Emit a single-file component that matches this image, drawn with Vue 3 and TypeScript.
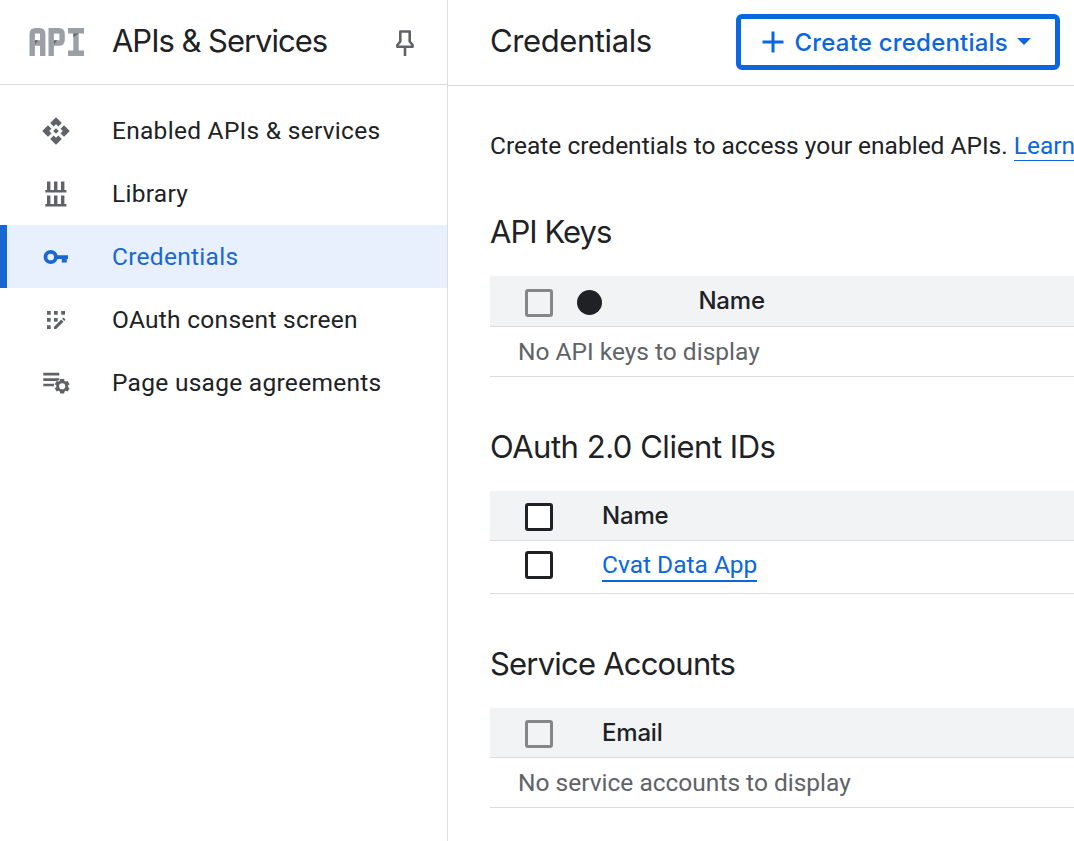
<script setup lang="ts">
interface NavItem { label: string; icon: string; active?: boolean }
interface Section {
  title: string
  kind: string
  column: string
  status?: boolean
  disabled?: boolean
  empty?: string
  rows?: string[]
}

const nav: NavItem[] = [
  { label: 'Enabled APIs & services', icon: 'api' },
  { label: 'Library', icon: 'library' },
  { label: 'Credentials', icon: 'key', active: true },
  { label: 'OAuth consent screen', icon: 'consent' },
  { label: 'Page usage agreements', icon: 'agreements' },
]

const sections: Section[] = [
  { title: 'API Keys', kind: 'keys', column: 'Name', status: true, disabled: true, empty: 'No API keys to display' },
  { title: 'OAuth 2.0 Client IDs', kind: 'clients', column: 'Name', rows: ['Cvat Data App'] },
  { title: 'Service Accounts', kind: 'accounts', column: 'Email', disabled: true, empty: 'No service accounts to display' },
]
</script>

<template>
  <div class="console">
    <aside class="sidebar">
      <header class="product">
        <svg class="logo" viewBox="0 0 56 28" role="img" aria-label="API">
          <g fill="none" stroke="#9aa0a6" stroke-width="5.4">
            <path d="M3.2 28V6Q3.2 2.7 6.5 2.7H10.4Q13.7 2.7 13.7 6V28M3.2 15H13.7" />
            <path d="M22.2 28V2.7H29.8Q33.1 2.7 33.1 6V11.7Q33.1 15 29.8 15H22.2" />
            <path d="M39 2.7H55M39 25.3H55M47 2.7V25.3" />
          </g>
          <path d="M6 12.3h3.2L6 16.5zM25 12.3h3.2L25 16.5zM44.4 5.4h5.2l-5.2 3.8z" fill="#63676c" />
        </svg>
        <h2 class="product-name">APIs &amp; Services</h2>
        <svg class="pin" viewBox="0 0 20 28">
          <path d="M5.3 2.5H14.7V12.5L17.6 16V17.8H2.4V16L5.3 12.5ZM10 18V27" fill="none" stroke="#5f6368" stroke-width="2.6" stroke-linejoin="round" />
        </svg>
      </header>

      <nav class="menu">
        <a v-for="item in nav" :key="item.label" class="menu-item" :class="{ active: item.active }">
          <svg class="menu-icon" viewBox="0 0 30 30" fill="currentColor">
            <g v-if="item.icon === 'api'">
              <path d="M15 1.2L20.8 7L17.3 10.5L15 8.2L12.7 10.5L9.2 7ZM1.2 15L7 9.2L10.5 12.7L8.2 15L10.5 17.3L7 20.8ZM28.8 15L23 9.2L19.5 12.7L21.8 15L19.5 17.3L23 20.8ZM15 28.8L9.2 23L12.7 19.5L15 21.8L17.3 19.5L20.8 23ZM15 12.2L17.8 15L15 17.8L12.2 15Z" />
            </g>
            <g v-else-if="item.icon === 'library'">
              <path d="M6 2.5h3.4v8.6h3.6V2.5h3.4v8.6h3.6V2.5h3.4v8.6H25.4v2.5H4.3v-2.5H6zM6 16.5h3.4v8.6h3.6v-8.6h3.4v8.6h3.6v-8.6h3.4v8.6h2v2.5H4.3v-2.5H6z" />
            </g>
            <g v-else-if="item.icon === 'key'">
              <circle cx="9.7" cy="15" r="5.2" fill="none" stroke="currentColor" stroke-width="3.7" />
              <path d="M15.5 13.2H27v3.8h-1.2v3.5h-5V17h-5.3z" />
            </g>
            <g v-else-if="item.icon === 'consent'">
              <path d="M6 6h3.7v3.7H6zM13 6h3.7v3.7H13zM20.2 6H24v3.7h-3.8zM6 13h3.7v3.7H6zM6 20.2h3.7V24H6zM13 13h3.7v3l-.8.7H13zM13 21.8l7.3-7.3 2.2 2.2-7.3 7.3H13zM21.1 13.7l.8-.8q.6-.5 1.1 0l1.1 1.1q.5.5 0 1.1l-.8.8z" />
            </g>
            <g v-else>
              <path d="M2.3 4.8H18.3v2.7H2.3zM2.3 10.2H18.3v2l-3 .7h-13zM2.3 15.7H13v2.6H2.3z" />
              <path fill-rule="evenodd" d="M19.8 11h4.4l.5 2.3 1.3.8 2.2-.8 2.2 3.7-1.8 1.6v1.5l1.8 1.6-2.2 3.7-2.2-.8-1.3.8-.5 2.3h-4.4l-.5-2.3-1.3-.8-2.2.8-2.2-3.7 1.8-1.6v-1.5L13.6 17l2.2-3.7 2.2.8 1.3-.8zM22 15.9a3.5 3.5 0 1 0 0 7 3.5 3.5 0 0 0 0-7z" transform="translate(1.8 1.2) scale(.88)" />
            </g>
          </svg>
          <span>{{ item.label }}</span>
        </a>
      </nav>
    </aside>

    <main class="main">
      <header class="topbar">
        <h1 class="page-title">Credentials</h1>
        <button class="create">
          <svg class="plus" viewBox="0 0 22 22"><path d="M11 0.5V21.5M0.5 11H21.5" stroke="currentColor" stroke-width="3" /></svg>
          <span class="create-label">Create credentials</span>
          <svg class="caret" viewBox="0 0 14 7"><path d="M0 0H14L7 7Z" fill="currentColor" /></svg>
        </button>
      </header>

      <div class="content">
        <p class="intro">Create credentials to access your enabled APIs. <a class="learn">Learn</a></p>
        <section v-for="s in sections" :key="s.kind" class="section" :class="s.kind">
          <h2 class="section-title">{{ s.title }}</h2>
          <div class="row head">
            <span class="box" :class="{ disabled: s.disabled }"></span>
            <span v-if="s.status" class="dot"></span>
            <span class="column">{{ s.column }}</span>
          </div>
          <div v-if="s.empty" class="row empty">{{ s.empty }}</div>
          <div v-for="r in s.rows" :key="r" class="row record">
            <span class="box"></span>
            <a class="record-link">{{ r }}</a>
          </div>
        </section>
      </div>
    </main>
  </div>
</template>

<style>
body { margin: 0; overflow: hidden; }
</style>

<style scoped>
* { box-sizing: border-box; }
h1, h2, p { margin: 0; font-weight: 400; }
.console {
  display: flex;
  width: 100%;
  height: 841px;
  overflow: hidden;
  background: #fff;
  color: #202124;
  font: 24.5px/32px Roboto, sans-serif;
  white-space: nowrap;
}
.sidebar { width: 448px; flex: none; border-right: 1px solid #dadce0; }
.product { display: flex; align-items: center; height: 85px; padding: 0 32px 1px 29px; border-bottom: 1px solid #dadce0; }
.logo { width: 56px; height: 28px; flex: none; }
.product-name, .page-title, .section-title { font: 400 31px/40px Inter, sans-serif; }
.product-name { margin: -1px 0 0 27px; letter-spacing: -1.03px; }
.pin { width: 20px; height: 28px; margin: 3px 0 0 auto; }
.menu { padding-top: 14px; }
.menu-item { display: flex; align-items: center; height: 63px; padding-left: 41px; border-left: 0 solid #1967d2; letter-spacing: 0.28px; }
.menu-item.active { padding-left: 34px; border-left-width: 7px; background: #e8f0fe; color: #1967d2; }
.menu-icon { width: 30px; height: 30px; margin-right: 41px; color: #5f6368; }
.active .menu-icon { color: #1967d2; }
.main { flex: 1; min-width: 0; overflow: hidden; }
.topbar { display: flex; align-items: center; height: 86px; padding: 0 14px 2px 42px; border-bottom: 1px solid #dadce0; }
.page-title { margin-top: -2px; letter-spacing: -0.4px; }
.create {
  display: flex; align-items: center;
  width: 324px; height: 56px; margin-left: auto; padding: 1px 0 0 21px;
  border: 5px solid #0b66e0; border-radius: 6px;
  background: #fff; color: #0b66e0;
  font: 500 24px/32px Inter, sans-serif;
}
.plus { width: 22px; height: 22px; }
.create-label { width: 213.5px; margin: 1px 0 0 10.5px; text-align: left; letter-spacing: 0.2px; }
.caret { width: 14px; height: 7px; margin: 0 0 2px 9px; }
.content { padding: 44px 0 0 42px; }
.learn { color: #0b66e0; border-bottom: 1px solid #0b66e0; }
.section { margin-top: 50px; }
.section-title { letter-spacing: -0.8px; }
.keys .section-title { letter-spacing: -0.95px; }
.clients .section-title { letter-spacing: -0.47px; }
.head { margin-top: 24px; background: #f1f3f4; }
.row { display: flex; align-items: center; height: 50px; border-bottom: 1px solid #dadce0; }
.keys .head { height: 51px; }
.record { height: 53px; }
.box { width: 28px; height: 28px; margin: 3px 49px 0 35px; border: 3px solid #202124; border-radius: 3px; flex: none; background: #fff; }
.record .box { margin-top: -4px; }
.box.disabled { border-color: #858688; background: transparent; }
.dot { width: 25px; height: 25px; margin: 3px 96.2px 0 -24.8px; border-radius: 50%; background: #202124; }
.column { font: 500 24px/32px Inter, sans-serif; letter-spacing: -0.2px; }
.empty { padding-left: 28px; color: #5f6368; }
.record-link { margin-top: -2px; color: #0b66e0; border-bottom: 2px solid #0b66e0; line-height: 30px; }
</style>
